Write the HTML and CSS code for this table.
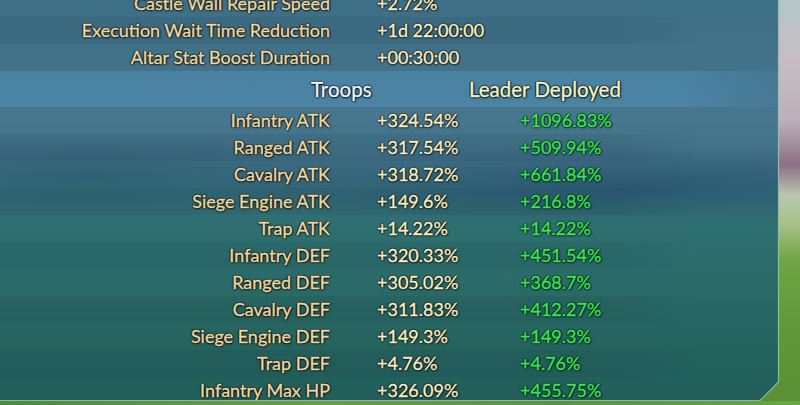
FILE: index.html
```html
<!DOCTYPE html>
<html>
<head>
<meta charset="utf-8">
<link rel="stylesheet" href="styles.css">
</head>
<body>
<div class="scene">
  <div class="panel">
    <div class="rows">
      <div class="row"><span class="label">Castle Wall Repair Speed</span><span class="val">+2.72%</span><span class="lead"></span></div>
      <div class="row alt"><span class="label">Execution Wait Time Reduction</span><span class="val">+1d 22:00:00</span><span class="lead"></span></div>
      <div class="row"><span class="label">Altar Stat Boost Duration</span><span class="val">+00:30:00</span><span class="lead"></span></div>
      <div class="head"><span></span><span class="h-troops">Troops</span><span class="h-lead">Leader Deployed</span></div>
      <div class="row"><span class="label">Infantry ATK</span><span class="val">+324.54%</span><span class="lead">+1096.83%</span></div>
      <div class="row alt"><span class="label">Ranged ATK</span><span class="val">+317.54%</span><span class="lead">+509.94%</span></div>
      <div class="row"><span class="label">Cavalry ATK</span><span class="val">+318.72%</span><span class="lead">+661.84%</span></div>
      <div class="row alt"><span class="label">Siege Engine ATK</span><span class="val">+149.6%</span><span class="lead">+216.8%</span></div>
      <div class="row"><span class="label">Trap ATK</span><span class="val">+14.22%</span><span class="lead">+14.22%</span></div>
      <div class="row alt"><span class="label">Infantry DEF</span><span class="val">+320.33%</span><span class="lead">+451.54%</span></div>
      <div class="row"><span class="label">Ranged DEF</span><span class="val">+305.02%</span><span class="lead">+368.7%</span></div>
      <div class="row alt"><span class="label">Cavalry DEF</span><span class="val">+311.83%</span><span class="lead">+412.27%</span></div>
      <div class="row"><span class="label">Siege Engine DEF</span><span class="val">+149.3%</span><span class="lead">+149.3%</span></div>
      <div class="row alt"><span class="label">Trap DEF</span><span class="val">+4.76%</span><span class="lead">+4.76%</span></div>
      <div class="row"><span class="label">Infantry Max HP</span><span class="val">+326.09%</span><span class="lead">+455.75%</span></div>
    </div>
  </div>
  <svg class="frame" width="800" height="405" viewBox="0 0 800 405">
    <path d="M778.5 0 V382 L760 400.5 H0" fill="none" stroke="#9fd0c4" stroke-opacity="0.8" stroke-width="1.2"/>
  </svg>
</div>
</body>
</html>
```

FILE: styles.css
```css
html, body {
  margin: 0;
  padding: 0;
  width: 800px;
  height: 405px;
  overflow: hidden;
}

.scene {
  position: relative;
  width: 800px;
  height: 405px;
  overflow: hidden;
  background:
    linear-gradient(180deg,
      #b4c6c7 0px,
      #c6bdc4 60px,
      #bcb0ba 120px,
      #8c6f86 165px,
      #b9c6b0 195px,
      #a8c088 225px,
      #6fa444 260px,
      #62983a 330px,
      #5a8f36 405px);
  font-family: Lato, "Open Sans", sans-serif;
}

.scene::after {
  content: "";
  position: absolute;
  left: 0;
  right: 0;
  bottom: 0;
  height: 4px;
  background: linear-gradient(90deg, #4f8a36, #6a9f3e 40%, #5a9238 70%, #6aa642);
}

.panel {
  display: flow-root;
  width: 779px;
  height: 401px;
  clip-path: polygon(0 0, 779px 0, 779px 382px, 760px 401px, 0 401px);
  background:
    radial-gradient(ellipse 420px 40px at 620px 185px, rgba(30,60,100,0.45), rgba(30,60,100,0) 100%),
    radial-gradient(ellipse 300px 40px at 90px 175px, rgba(25,70,90,0.35), rgba(25,70,90,0) 100%),
    linear-gradient(180deg,
      #3d6f86 0px,
      #41728a 60px,
      #46778f 120px,
      #3f7086 160px,
      #346e7a 195px,
      #2e6f70 230px,
      #2a6b68 280px,
      #25645f 340px,
      #215e5b 401px);
}

.rows {
  margin-top: -10px;
}

.row {
  display: grid;
  grid-template-columns: 330px 190px 1fr;
  height: 27px;
  align-items: center;
  font-size: 18px;
  line-height: 27px;
  -webkit-text-stroke: 0.35px currentColor;
  text-shadow:
    1px 0 1px rgba(20,15,5,0.75),
    -1px 0 1px rgba(20,15,5,0.75),
    0 1px 1px rgba(20,15,5,0.75),
    0 -1px 1px rgba(20,15,5,0.6),
    1px 1px 2px rgba(0,0,0,0.6);
}

.row.alt {
  background: linear-gradient(90deg, rgba(20,40,60,0.09) 0, rgba(20,40,60,0.09) 620px, rgba(20,40,60,0) 700px);
}

.label {
  text-align: right;
  color: #e8d9a8;
}

.val {
  padding-left: 47px;
  color: #f3efcc;
  white-space: nowrap;
}

.lead {
  color: #3fe060;
  white-space: nowrap;
  text-shadow:
    1px 0 1px rgba(0,40,10,0.85),
    -1px 0 1px rgba(0,40,10,0.85),
    0 1px 1px rgba(0,40,10,0.85),
    0 -1px 1px rgba(0,40,10,0.7),
    1px 1px 2px rgba(0,20,5,0.6);
}

.head {
  display: grid;
  grid-template-columns: 311px 158px 1fr;
  height: 36px;
  align-items: center;
  line-height: 36px;
  font-size: 20.5px;
  -webkit-text-stroke: 0.4px currentColor;
  background: linear-gradient(90deg, rgba(90,160,210,0.32) 0, rgba(90,160,210,0.32) 680px, rgba(90,160,210,0.12) 770px);
  text-shadow:
    1px 0 1px rgba(0,10,20,0.85),
    -1px 0 1px rgba(0,10,20,0.85),
    0 1px 1px rgba(0,10,20,0.85),
    0 -1px 1px rgba(0,10,20,0.7),
    1px 1px 2px rgba(0,0,0,0.6);
}

.h-troops {
  color: #eaf3fb;
}

.h-lead {
  color: #eff4c8;
}

.frame {
  position: absolute;
  left: 0;
  top: 0;
  pointer-events: none;
}
```
